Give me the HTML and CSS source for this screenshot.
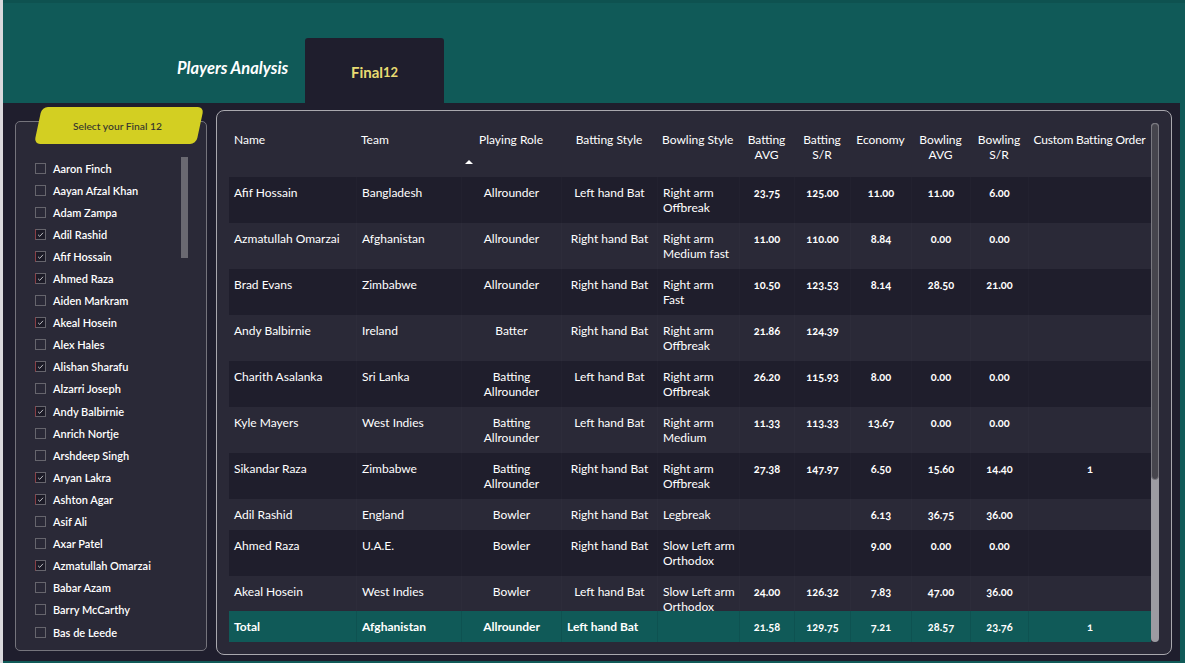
FILE: index.html
```html
<!DOCTYPE html>
<html lang="en">
<head>
<meta charset="utf-8">
<title>Players Analysis</title>
<link rel="stylesheet" href="styles.css">
</head>
<body>
<div class="page">
  <header class="header">
    <div class="title">Players Analysis</div>
    <div class="tab">Final<span class="tab-num">12</span></div>
  </header>
  <main class="main">
    <section class="slicer">
      <div class="badge"><span class="badge-text">Select your Final 12</span></div>
      <div class="slicer-body">
        <ul class="list">
          <li class="item"><span class="box"></span>Aaron Finch</li>
          <li class="item"><span class="box"></span>Aayan Afzal Khan</li>
          <li class="item"><span class="box"></span>Adam Zampa</li>
          <li class="item"><span class="box checked"><svg viewBox="0 0 11 11"><polyline points="2.5,5.8 4.6,7.8 8.6,3.4"/></svg></span>Adil Rashid</li>
          <li class="item"><span class="box checked"><svg viewBox="0 0 11 11"><polyline points="2.5,5.8 4.6,7.8 8.6,3.4"/></svg></span>Afif Hossain</li>
          <li class="item"><span class="box checked"><svg viewBox="0 0 11 11"><polyline points="2.5,5.8 4.6,7.8 8.6,3.4"/></svg></span>Ahmed Raza</li>
          <li class="item"><span class="box"></span>Aiden Markram</li>
          <li class="item"><span class="box checked"><svg viewBox="0 0 11 11"><polyline points="2.5,5.8 4.6,7.8 8.6,3.4"/></svg></span>Akeal Hosein</li>
          <li class="item"><span class="box"></span>Alex Hales</li>
          <li class="item"><span class="box checked"><svg viewBox="0 0 11 11"><polyline points="2.5,5.8 4.6,7.8 8.6,3.4"/></svg></span>Alishan Sharafu</li>
          <li class="item"><span class="box"></span>Alzarri Joseph</li>
          <li class="item"><span class="box checked"><svg viewBox="0 0 11 11"><polyline points="2.5,5.8 4.6,7.8 8.6,3.4"/></svg></span>Andy Balbirnie</li>
          <li class="item"><span class="box"></span>Anrich Nortje</li>
          <li class="item"><span class="box"></span>Arshdeep Singh</li>
          <li class="item"><span class="box checked"><svg viewBox="0 0 11 11"><polyline points="2.5,5.8 4.6,7.8 8.6,3.4"/></svg></span>Aryan Lakra</li>
          <li class="item"><span class="box checked"><svg viewBox="0 0 11 11"><polyline points="2.5,5.8 4.6,7.8 8.6,3.4"/></svg></span>Ashton Agar</li>
          <li class="item"><span class="box"></span>Asif Ali</li>
          <li class="item"><span class="box"></span>Axar Patel</li>
          <li class="item"><span class="box checked"><svg viewBox="0 0 11 11"><polyline points="2.5,5.8 4.6,7.8 8.6,3.4"/></svg></span>Azmatullah Omarzai</li>
          <li class="item"><span class="box"></span>Babar Azam</li>
          <li class="item"><span class="box"></span>Barry McCarthy</li>
          <li class="item"><span class="box"></span>Bas de Leede</li>
        </ul>
        <div class="list-scroll"></div>
      </div>
    </section>

    <section class="panel">
      <div class="table">
        <div class="row head">
          <div class="c">Name</div>
          <div class="c">Team</div>
          <div class="c ctr sorted">Playing Role<span class="sort"></span></div>
          <div class="c ctr">Batting Style</div>
          <div class="c">Bowling Style</div>
          <div class="c ctr">Batting<br>AVG</div>
          <div class="c ctr">Batting<br>S/R</div>
          <div class="c ctr">Economy</div>
          <div class="c ctr">Bowling<br>AVG</div>
          <div class="c ctr">Bowling<br>S/R</div>
          <div class="c ctr">Custom Batting Order</div>
        </div>
        <div class="body">
          <div class="row odd">
            <div class="c">Afif Hossain</div><div class="c">Bangladesh</div><div class="c ctr">Allrounder</div><div class="c ctr">Left hand Bat</div><div class="c">Right arm<br>Offbreak</div>
            <div class="c ctr num">23.75</div><div class="c ctr num">125.00</div><div class="c ctr num">11.00</div><div class="c ctr num">11.00</div><div class="c ctr num">6.00</div><div class="c ctr num"></div>
          </div>
          <div class="row even">
            <div class="c">Azmatullah Omarzai</div><div class="c">Afghanistan</div><div class="c ctr">Allrounder</div><div class="c ctr">Right hand Bat</div><div class="c">Right arm<br>Medium fast</div>
            <div class="c ctr num">11.00</div><div class="c ctr num">110.00</div><div class="c ctr num">8.84</div><div class="c ctr num">0.00</div><div class="c ctr num">0.00</div><div class="c ctr num"></div>
          </div>
          <div class="row odd">
            <div class="c">Brad Evans</div><div class="c">Zimbabwe</div><div class="c ctr">Allrounder</div><div class="c ctr">Right hand Bat</div><div class="c">Right arm<br>Fast</div>
            <div class="c ctr num">10.50</div><div class="c ctr num">123.53</div><div class="c ctr num">8.14</div><div class="c ctr num">28.50</div><div class="c ctr num">21.00</div><div class="c ctr num"></div>
          </div>
          <div class="row even">
            <div class="c">Andy Balbirnie</div><div class="c">Ireland</div><div class="c ctr">Batter</div><div class="c ctr">Right hand Bat</div><div class="c">Right arm<br>Offbreak</div>
            <div class="c ctr num">21.86</div><div class="c ctr num">124.39</div><div class="c ctr num"></div><div class="c ctr num"></div><div class="c ctr num"></div><div class="c ctr num"></div>
          </div>
          <div class="row odd">
            <div class="c">Charith Asalanka</div><div class="c">Sri Lanka</div><div class="c ctr">Batting<br>Allrounder</div><div class="c ctr">Left hand Bat</div><div class="c">Right arm<br>Offbreak</div>
            <div class="c ctr num">26.20</div><div class="c ctr num">115.93</div><div class="c ctr num">8.00</div><div class="c ctr num">0.00</div><div class="c ctr num">0.00</div><div class="c ctr num"></div>
          </div>
          <div class="row even">
            <div class="c">Kyle Mayers</div><div class="c">West Indies</div><div class="c ctr">Batting<br>Allrounder</div><div class="c ctr">Left hand Bat</div><div class="c">Right arm<br>Medium</div>
            <div class="c ctr num">11.33</div><div class="c ctr num">113.33</div><div class="c ctr num">13.67</div><div class="c ctr num">0.00</div><div class="c ctr num">0.00</div><div class="c ctr num"></div>
          </div>
          <div class="row odd">
            <div class="c">Sikandar Raza</div><div class="c">Zimbabwe</div><div class="c ctr">Batting<br>Allrounder</div><div class="c ctr">Right hand Bat</div><div class="c">Right arm<br>Offbreak</div>
            <div class="c ctr num">27.38</div><div class="c ctr num">147.97</div><div class="c ctr num">6.50</div><div class="c ctr num">15.60</div><div class="c ctr num">14.40</div><div class="c ctr num">1</div>
          </div>
          <div class="row even">
            <div class="c">Adil Rashid</div><div class="c">England</div><div class="c ctr">Bowler</div><div class="c ctr">Right hand Bat</div><div class="c">Legbreak</div>
            <div class="c ctr num"></div><div class="c ctr num"></div><div class="c ctr num">6.13</div><div class="c ctr num">36.75</div><div class="c ctr num">36.00</div><div class="c ctr num"></div>
          </div>
          <div class="row odd">
            <div class="c">Ahmed Raza</div><div class="c">U.A.E.</div><div class="c ctr">Bowler</div><div class="c ctr">Right hand Bat</div><div class="c">Slow Left arm<br>Orthodox</div>
            <div class="c ctr num"></div><div class="c ctr num"></div><div class="c ctr num">9.00</div><div class="c ctr num">0.00</div><div class="c ctr num">0.00</div><div class="c ctr num"></div>
          </div>
          <div class="row even">
            <div class="c">Akeal Hosein</div><div class="c">West Indies</div><div class="c ctr">Bowler</div><div class="c ctr">Left hand Bat</div><div class="c">Slow Left arm<br>Orthodox</div>
            <div class="c ctr num">24.00</div><div class="c ctr num">126.32</div><div class="c ctr num">7.83</div><div class="c ctr num">47.00</div><div class="c ctr num">36.00</div><div class="c ctr num"></div>
          </div>
        </div>
        <div class="row total">
          <div class="c">Total</div><div class="c">Afghanistan</div><div class="c ctr">Allrounder</div><div class="c">Left hand Bat</div><div class="c"></div>
          <div class="c ctr num">21.58</div><div class="c ctr num">129.75</div><div class="c ctr num">7.21</div><div class="c ctr num">28.57</div><div class="c ctr num">23.76</div><div class="c ctr num">1</div>
        </div>
      </div>
      <div class="vscroll"><div class="vthumb"></div></div>
    </section>
  </main>
</div>
</body>
</html>
```

FILE: styles.css
```css
* { box-sizing: border-box; }
html, body { margin: 0; padding: 0; }
body {
  background: #105a58;
  font-family: Lato, "Open Sans", "Liberation Sans", sans-serif;
  color: #ffffff;
}
.page {
  width: 1185px;
  height: 663px;
  border-left: 3px solid #d9d9dc;
  display: flex;
  flex-direction: column;
  overflow: hidden;
}
.header {
  height: 103px;
  display: flex;
  align-items: flex-end;
  padding-left: 174px;
  background: #105a58;
  border-top: 3px solid #0e5250;
}
.title {
  width: 128px;
  margin-bottom: 25px;
  font-size: 16.5px;
  font-weight: 700;
  font-style: italic;
  line-height: 20px;
  color: #ffffff;
  white-space: nowrap;
}
.tab {
  width: 139px;
  height: 65px;
  background: #1f1e2d;
  border-radius: 3px 3px 0 0;
  display: flex;
  align-items: center;
  justify-content: center;
  padding-top: 3px;
  color: #e8db72;
  font-weight: 700;
  font-size: 15px;
}
.tab-num { font-size: 13px; }
.main {
  height: 558px;
  width: 1177px;
  background: #1f1e2d;
  display: flex;
  align-items: flex-start;
  padding-left: 12px;
}
.slicer {
  position: relative;
  margin-top: 18px;
  width: 192px;
  height: 530px;
  border: 1px solid #75747c;
  border-radius: 5px;
  background: #2a2937;
  padding: 35px 18px 0 19px;
}
.badge {
  position: absolute;
  left: 22px;
  top: -15px;
  width: 162px;
  height: 37px;
  background: #d3cf22;
  border-radius: 6px;
  transform: skewX(-12deg);
  display: flex;
  align-items: center;
  justify-content: center;
}
.badge-text {
  transform: skewX(12deg);
  color: #34332e;
  font-size: 10.3px;
  font-weight: 500;
  padding-right: 2px;
}
.slicer-body {
  display: flex;
  align-items: flex-start;
}
.list {
  list-style: none;
  margin: 0;
  padding: 0;
  flex: 1;
}
.item {
  height: 22.1px;
  display: flex;
  align-items: center;
  font-size: 11px;
  font-weight: 600;
  color: #ffffff;
  white-space: nowrap;
}
.box {
  width: 11px;
  height: 11px;
  border: 1px solid #66656d;
  margin-right: 7px;
  flex: none;
  display: flex;
}
.box.checked {
  background: #1c1b27;
  border-left-color: #8a3f45;
}
.box svg {
  width: 9px;
  height: 9px;
  fill: none;
  stroke: #d8d8dc;
  stroke-width: 1;
}
.list-scroll {
  width: 7px;
  height: 101px;
  background: #6a6971;
  flex: none;
}
.panel {
  margin-top: 7px;
  margin-left: 9px;
  width: 956px;
  height: 545px;
  border: 1px solid #a9a8ae;
  border-radius: 8px;
  background: #2a2937;
  padding: 12px;
  display: flex;
}
.table {
  width: 922px;
  display: flex;
  flex-direction: column;
}
.row {
  display: grid;
  grid-template-columns: 127px 105px 100px 96px 82px 55px 56px 61px 59px 58px 123px;
  font-size: 12px;
  line-height: 15px;
}
.c {
  padding: 8px 5px;
  white-space: nowrap;
}
.ctr { text-align: center; }
.num {
  font-size: 11px;
  font-weight: 700;
  font-variant-numeric: oldstyle-nums;
}
.head {
  height: 54px;
  flex: none;
}
.head .c {
  padding-top: 9px;
  position: relative;
}
.head .c:last-child { letter-spacing: -0.2px; }
.sort {
  position: absolute;
  left: 4px;
  top: 37px;
  width: 0;
  height: 0;
  border-left: 4px solid transparent;
  border-right: 4px solid transparent;
  border-bottom: 4px solid #ffffff;
}
.body {
  height: 434px;
  overflow: hidden;
  flex: none;
}
.odd { background: #1f1e2c; }
.even { background: #2a2937; }
.body .c + .c { border-left: 1px solid rgba(255, 255, 255, 0.015); }
.total {
  background: #105a58;
  height: 31px;
  flex: none;
  font-weight: 700;
}
.total .c {
  padding: 8px 5px;
  border-left: 1px solid rgba(0, 0, 0, 0.08);
}
.total .c:first-child { border-left: none; }
.vscroll {
  width: 8px;
  height: 519px;
  background: #9c9ba2;
  border-radius: 4px;
  flex: none;
}
.vthumb {
  height: 357px;
  background: #46454d;
  border: 1px solid #7a7980;
  border-radius: 4px;
}
```
